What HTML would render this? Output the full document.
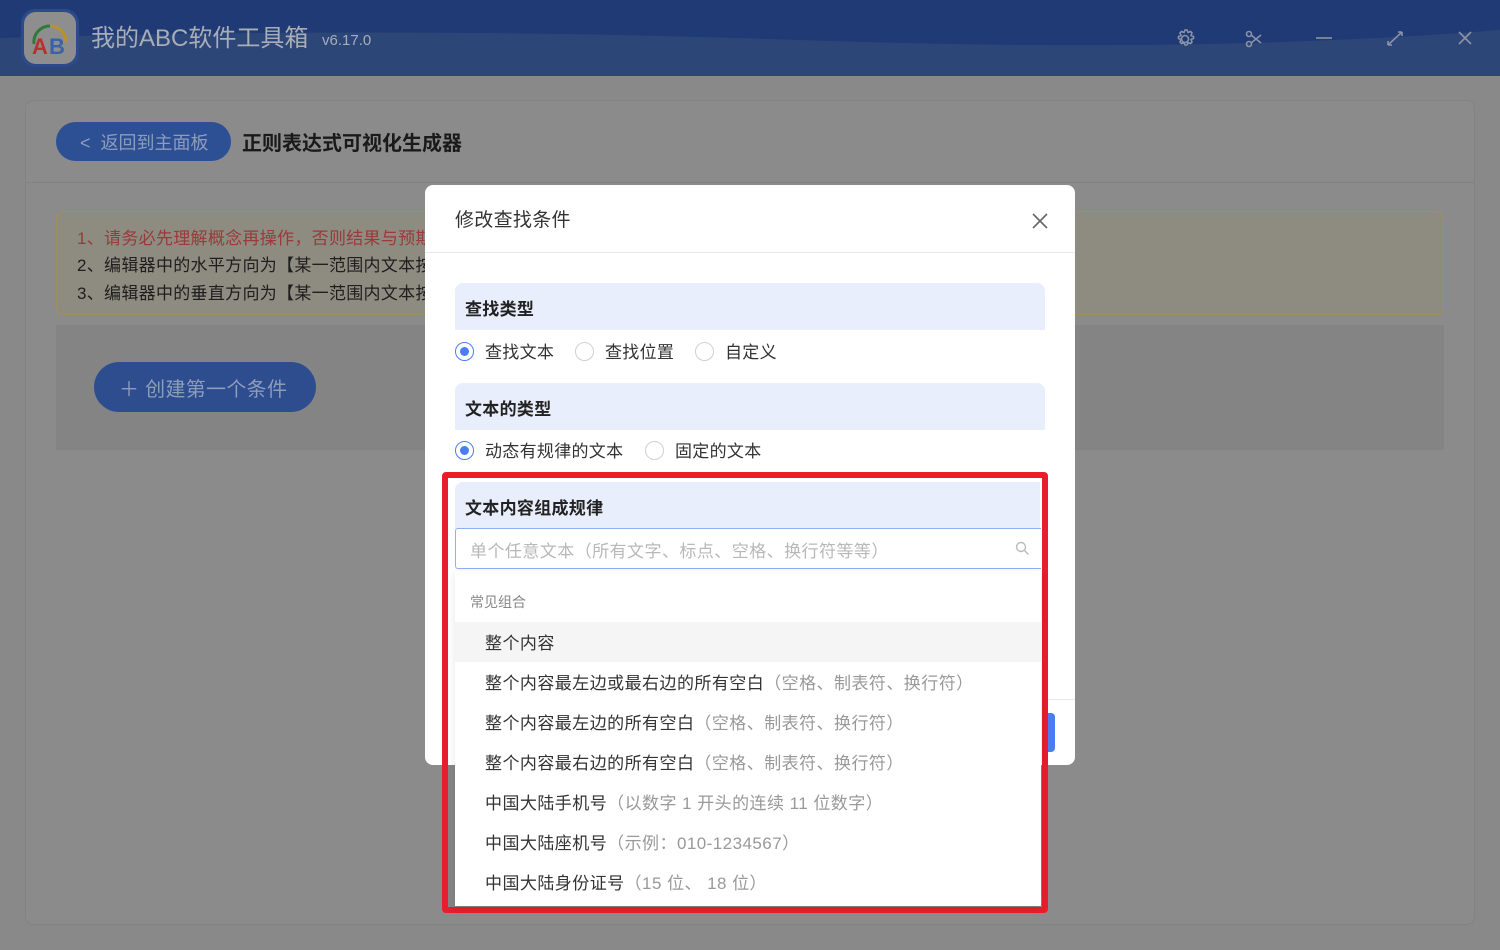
<!DOCTYPE html>
<html><head><meta charset="utf-8"><style>
*{box-sizing:border-box;margin:0;padding:0}
body{width:1500px;height:950px;overflow:hidden;background:#898989;font-family:"Liberation Sans","Noto Sans CJK SC",sans-serif;position:relative}
.abs{position:absolute}
.hdr{left:0;top:0;width:1500px;height:75px;background:#1f3a75}
.t{white-space:nowrap;line-height:1}
.rad{width:19px;height:19px;border-radius:50%;border:1px solid #d0d0d0;background:#fff}
.rad.on{border:1px solid #4a7ef0}
.rad.on::after{content:"";position:absolute;left:4px;top:4px;width:9px;height:9px;border-radius:50%;background:#4a7ef0}
.sec{left:455px;width:590px;height:47px;background:#e8eefb;border-radius:8px 8px 0 0}
.lbl{font-size:17px;font-weight:bold;color:#222;letter-spacing:0.3px}
.it{left:485px;font-size:17px;color:#333;letter-spacing:0.45px}
.it span{color:#999}
.r{font-size:17px;color:#333;letter-spacing:0.3px}
</style></head><body>
<div class="abs hdr"></div>
<svg class="abs" style="left:0;top:30px" width="1500" height="46"><path d="M0 8 Q400 -4 800 10 T1500 0 V46 H0Z" fill="#2d4678"/></svg>
<div class="abs" style="left:21px;top:9px;width:58px;height:58px;border-radius:14px;background:#2d4a8a"></div>
<div class="abs" style="left:24px;top:12px;width:52px;height:52px;border-radius:12px;background:#8e8e8e"></div>
<svg class="abs" style="left:24px;top:12px" width="52" height="52"><path d="M10 32 A16 16 0 0 1 26 14" stroke="#2f7a3a" stroke-width="3" fill="none"/><path d="M26 14 A16 16 0 0 1 42 30" stroke="#b8922a" stroke-width="3" fill="none"/><text x="8" y="42" font-size="22" font-weight="bold" fill="#b83030" font-family="Liberation Sans">A</text><text x="25" y="42" font-size="22" font-weight="bold" fill="#3a62a8" font-family="Liberation Sans">B</text></svg>
<div class="abs t" style="left:91px;top:27px;font-size:24px;color:#a8adb8">我的ABC软件工具箱</div>
<div class="abs t" style="left:322px;top:33px;font-size:15px;color:#a8adb8">v6.17.0</div>
<svg class="abs" style="left:1170px;top:24px" width="310" height="30" fill="none" stroke="#8a93a6" stroke-width="1.6">
<circle cx="15" cy="15" r="3.5"/><path d="M15 6l2 0 1 2.5 2.5-1 1.5 1.5-1 2.5 2.5 1v2l-2.5 1 1 2.5-1.5 1.5-2.5-1-1 2.5h-2l-1-2.5-2.5 1-1.5-1.5 1-2.5-2.5-1v-2l2.5-1-1-2.5 1.5-1.5 2.5 1z"/>
<circle cx="79" cy="10" r="2.5"/><circle cx="79" cy="20" r="2.5"/><path d="M81 11l10 8M81 19l10-8"/>
<path d="M146 14h16"/>
<path d="M218 21l14-13M218 21v-4M218 21h4M232 8v4M232 8h-4"/>
<path d="M289 8l12 12M301 8l-12 12"/></svg>
<div class="abs" style="left:25px;top:100px;width:1450px;height:825px;border:1px solid #828282;border-radius:8px;background:#8b8b8b"></div>
<div class="abs" style="left:26px;top:182px;width:1448px;height:1px;background:#828282"></div>
<div class="abs" style="left:56px;top:122px;width:175px;height:39px;border-radius:20px;background:#2d4f94"></div>
<div class="abs t" style="left:80px;top:134px;font-size:18px;color:#8d9cbc">&lt;&nbsp; 返回到主面板</div>
<div class="abs t" style="left:242px;top:134px;font-size:20px;font-weight:bold;color:#1a1a1a">正则表达式可视化生成器</div>
<div class="abs" style="left:56px;top:211px;width:1388px;height:104px;border:1px solid #a38f5c;border-radius:8px;background:#8e8b80"></div>
<div class="abs t" style="left:77px;top:225px;font-size:17px;color:#9a3a3a;line-height:28px;letter-spacing:0.3px">1、请务必先理解概念再操作，否则结果与预期</div>
<div class="abs t" style="left:77px;top:252px;font-size:17px;color:#1e1e1e;line-height:28px;letter-spacing:0.3px">2、编辑器中的水平方向为【某一范围内文本按<br>3、编辑器中的垂直方向为【某一范围内文本按</div>
<div class="abs" style="left:56px;top:325px;width:1388px;height:125px;background:#848484"></div>
<div class="abs" style="left:94px;top:362px;width:222px;height:50px;border-radius:25px;background:#2d4d8e"></div>
<div class="abs t" style="left:119px;top:380px;font-size:20px;color:#8d9cbc;letter-spacing:0.3px">＋ 创建第一个条件</div>

<div class="abs" style="left:425px;top:185px;width:650px;height:580px;background:#fff;border-radius:8px"></div>
<div class="abs t" style="left:455px;top:211px;font-size:19px;color:#333;letter-spacing:0.3px">修改查找条件</div>
<svg class="abs" style="left:1031px;top:212px" width="18" height="18" stroke="#666" stroke-width="1.6"><path d="M2 2l14 14M16 2L2 16"/></svg>
<div class="abs" style="left:425px;top:252px;width:650px;height:1px;background:#e8e8e8"></div>
<div class="abs sec" style="top:283px"></div>
<div class="abs t lbl" style="left:465px;top:301px">查找类型</div>
<div class="abs rad on" style="left:455px;top:342px"></div><div class="abs t r" style="left:485px;top:344px">查找文本</div>
<div class="abs rad" style="left:575px;top:342px"></div><div class="abs t r" style="left:605px;top:344px">查找位置</div>
<div class="abs rad" style="left:695px;top:342px"></div><div class="abs t r" style="left:725px;top:344px">自定义</div>
<div class="abs sec" style="top:383px"></div>
<div class="abs t lbl" style="left:465px;top:401px">文本的类型</div>
<div class="abs rad on" style="left:455px;top:441px"></div><div class="abs t r" style="left:485px;top:443px">动态有规律的文本</div>
<div class="abs rad" style="left:645px;top:441px"></div><div class="abs t r" style="left:675px;top:443px">固定的文本</div>
<div class="abs" style="left:1047px;top:699px;width:28px;height:1px;background:#e8e8e8"></div>
<div class="abs" style="left:1040px;top:713px;width:15px;height:39px;background:#4a7ef0;border-radius:0 4px 4px 0"></div>

<div class="abs" style="left:442px;top:472px;width:606px;height:441px;border:6px solid #e81e2a;border-radius:4px;background:#858585"></div>
<div class="abs" style="left:448px;top:478px;width:594px;height:287px;background:#fff"></div>
<div class="abs" style="left:455px;top:482px;width:585px;height:47px;background:#e8eefb;border-radius:8px 0 0 0"></div>
<div class="abs t lbl" style="left:465px;top:500px">文本内容组成规律</div>
<div class="abs" style="left:455px;top:528px;width:586px;height:41px;border:1px solid #8fb0f0;border-right:none;border-radius:3px 0 0 3px;background:#fff"></div>
<div class="abs t" style="left:470px;top:543px;font-size:17px;color:#b8b8b8;letter-spacing:0.45px">单个任意文本（所有文字、标点、空格、换行符等等）</div>
<svg class="abs" style="left:1015px;top:541px" width="16" height="16" stroke="#bbb" stroke-width="1.4" fill="none"><circle cx="6" cy="6" r="4.5"/><path d="M9.5 9.5l4 4"/></svg>
<div class="abs" style="left:455px;top:571px;width:586px;height:335px;background:#fff;box-shadow:0 2px 8px rgba(0,0,0,.1)"></div>
<div class="abs t" style="left:470px;top:595px;font-size:14px;color:#888">常见组合</div>
<div class="abs" style="left:455px;top:622px;width:586px;height:40px;background:#f5f5f5"></div>
<div class="abs t it" style="top:635px">整个内容</div>
<div class="abs t it" style="top:675px">整个内容最左边或最右边的所有空白<span>（空格、制表符、换行符）</span></div>
<div class="abs t it" style="top:715px">整个内容最左边的所有空白<span>（空格、制表符、换行符）</span></div>
<div class="abs t it" style="top:755px">整个内容最右边的所有空白<span>（空格、制表符、换行符）</span></div>
<div class="abs t it" style="top:795px">中国大陆手机号<span>（以数字 1 开头的连续 11 位数字）</span></div>
<div class="abs t it" style="top:835px">中国大陆座机号<span>（示例：010-1234567）</span></div>
<div class="abs t it" style="top:875px">中国大陆身份证号<span>（15 位、 18 位）</span></div>
</body></html>
